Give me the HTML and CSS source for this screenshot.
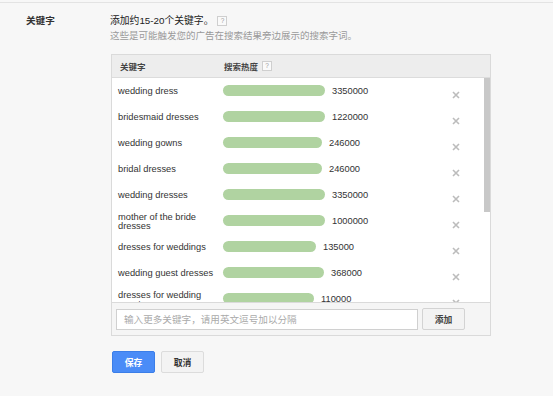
FILE: index.html
```html
<!DOCTYPE html>
<html lang="zh-CN">
<head>
<meta charset="utf-8">
<title>关键字</title>
<link rel="stylesheet" href="styles.css">
</head>
<body>
<div class="page">
  <div class="section">
    <div class="label">关键字</div>
    <div class="content">
      <div class="intro">添加约15-20个关键字。<span class="help">?</span></div>
      <div class="sub">这些是可能触发您的广告在搜索结果旁边展示的搜索字词。</div>
      <div class="panel">
        <div class="phead">
          <div class="hk">关键字</div>
          <div class="hv">搜索热度<span class="help hhelp">?</span></div>
        </div>
        <div class="pbody">
          <div class="list">
            <div class="row"><div class="kw">wedding dress</div><div class="vol"><span class="bar" style="width:102px"></span><span class="num">3350000</span></div><div class="rm"><svg viewBox="0 0 8 8" width="8" height="8"><path d="M1 1L7 7M7 1L1 7"/></svg></div></div>
            <div class="row"><div class="kw">bridesmaid dresses</div><div class="vol"><span class="bar" style="width:102px"></span><span class="num">1220000</span></div><div class="rm"><svg viewBox="0 0 8 8" width="8" height="8"><path d="M1 1L7 7M7 1L1 7"/></svg></div></div>
            <div class="row"><div class="kw">wedding gowns</div><div class="vol"><span class="bar" style="width:99px"></span><span class="num">246000</span></div><div class="rm"><svg viewBox="0 0 8 8" width="8" height="8"><path d="M1 1L7 7M7 1L1 7"/></svg></div></div>
            <div class="row"><div class="kw">bridal dresses</div><div class="vol"><span class="bar" style="width:99px"></span><span class="num">246000</span></div><div class="rm"><svg viewBox="0 0 8 8" width="8" height="8"><path d="M1 1L7 7M7 1L1 7"/></svg></div></div>
            <div class="row"><div class="kw">wedding dresses</div><div class="vol"><span class="bar" style="width:102px"></span><span class="num">3350000</span></div><div class="rm"><svg viewBox="0 0 8 8" width="8" height="8"><path d="M1 1L7 7M7 1L1 7"/></svg></div></div>
            <div class="row"><div class="kw">mother of the bride dresses</div><div class="vol"><span class="bar" style="width:102px"></span><span class="num">1000000</span></div><div class="rm"><svg viewBox="0 0 8 8" width="8" height="8"><path d="M1 1L7 7M7 1L1 7"/></svg></div></div>
            <div class="row"><div class="kw">dresses for weddings</div><div class="vol"><span class="bar" style="width:93px"></span><span class="num">135000</span></div><div class="rm"><svg viewBox="0 0 8 8" width="8" height="8"><path d="M1 1L7 7M7 1L1 7"/></svg></div></div>
            <div class="row"><div class="kw">wedding guest dresses</div><div class="vol"><span class="bar" style="width:101px"></span><span class="num">368000</span></div><div class="rm"><svg viewBox="0 0 8 8" width="8" height="8"><path d="M1 1L7 7M7 1L1 7"/></svg></div></div>
            <div class="row"><div class="kw">dresses for wedding guests</div><div class="vol"><span class="bar" style="width:91px"></span><span class="num">110000</span></div><div class="rm"><svg viewBox="0 0 8 8" width="8" height="8"><path d="M1 1L7 7M7 1L1 7"/></svg></div></div>
          </div>
          <div class="track"><div class="thumb"></div></div>
        </div>
        <div class="pfoot">
          <div class="input">输入更多关键字，请用英文逗号加以分隔</div>
          <button class="btn add">添加</button>
        </div>
      </div>
      <div class="actions">
        <button class="btn save">保存</button>
        <button class="btn cancel">取消</button>
      </div>
    </div>
  </div>
</div>
</body>
</html>
```
FILE: styles.css
```css
html, body {
  margin: 0;
  padding: 0;
  background: #f7f7f7;
}
body {
  font-family: "Liberation Sans", "Noto Sans CJK SC", sans-serif;
  color: #333;
  width: 553px;
  height: 396px;
  overflow: hidden;
}
.page {
  margin-top: 2px;
  border-top: 1px solid #e3e3e3;
}
.section {
  display: flex;
}
.label {
  width: 84px;
  padding-left: 26px;
  padding-top: 10px;
  font-size: 9.6px;
  line-height: 15px;
  font-weight: bold;
  color: #333;
  box-sizing: content-box;
}
.content {
  padding-top: 10px;
  display: flex;
  flex-direction: column;
}
.intro {
  font-size: 9.8px;
  line-height: 15px;
  color: #222;
  display: flex;
  align-items: center;
}
.help {
  display: inline-flex;
  align-items: center;
  justify-content: center;
  width: 8px;
  height: 8px;
  border: 1px solid #cfcfcf;
  background: #fafafa;
  color: #9a9a9a;
  font-size: 6.5px;
  line-height: 8px;
  font-weight: normal;
  font-family: "Liberation Sans", sans-serif;
  margin-left: 4px;
  box-sizing: content-box;
}
.sub {
  font-size: 9.5px;
  line-height: 15px;
  color: #9a9a9a;
}
.panel {
  margin-top: 11px;
  margin-left: 1px;
  width: 378px;
  border: 1px solid #dadada;
  background: #fff;
}
.phead {
  height: 22px;
  background: #ededed;
  border-bottom: 1px solid #dcdcdc;
  display: flex;
  align-items: center;
  font-size: 8.5px;
  font-weight: bold;
  color: #444;
}
.hk {
  width: 112px;
  padding-left: 8px;
  box-sizing: border-box;
}
.hv {
  display: flex;
  align-items: center;
}
.pbody {
  display: flex;
  height: 224px;
}
.list {
  width: 372px;
  height: 224px;
  overflow: hidden;
}
.track {
  width: 6px;
  background: #fff;
}
.thumb {
  height: 134px;
  background: #c8c8c8;
}
.row {
  height: 26px;
  padding-left: 6px;
  padding-bottom: 2px;
  box-sizing: border-box;
  display: grid;
  grid-template-columns: 105px 228px 10px;
  align-items: center;
  font-size: 9.3px;
  color: #333;
}
.kw {
  line-height: 9.5px;
  padding-right: 4px;
  padding-top: 4px;
}
.vol {
  display: flex;
  align-items: center;
}
.bar {
  display: block;
  height: 11px;
  border-radius: 6px;
  background: #b0d3a1;
}
.num {
  margin-left: 7px;
  line-height: 11px;
  padding-top: 3px;
}
.rm {
  margin-top: 10px;
  display: flex;
  justify-content: center;
}
.rm svg {
  display: block;
  stroke: #bcbcbc;
  stroke-width: 1.6;
  fill: none;
}
.pfoot {
  border-top: 1px solid #dadada;
  background: #f5f5f5;
  padding: 5px 4px 5px 4px;
  display: flex;
  align-items: center;
  gap: 4px;
}
.input {
  width: 302px;
  height: 21px;
  box-sizing: border-box;
  border: 1px solid #d0d0d0;
  background: #fff;
  color: #aaa;
  font-size: 9.6px;
  line-height: 19px;
  padding-left: 7px;
}
.btn {
  font-family: "Liberation Sans", "Noto Sans CJK SC", sans-serif;
  font-weight: bold;
  font-size: 8.8px;
  height: 22px;
  width: 43px;
  padding: 0;
  border-radius: 2px;
  box-sizing: border-box;
  display: flex;
  align-items: center;
  justify-content: center;
}
.add {
  border: 1px solid #d3d3d3;
  background: #f3f3f3;
  color: #444;
}
.actions {
  margin-top: 15px;
  padding-left: 2px;
  display: flex;
  gap: 6px;
}
.save {
  background: #4a8cf7;
  border: 1px solid #3b7ee8;
  color: #fff;
}
.cancel {
  background: #f3f3f3;
  border: 1px solid #dcdcdc;
  color: #333;
}
```
